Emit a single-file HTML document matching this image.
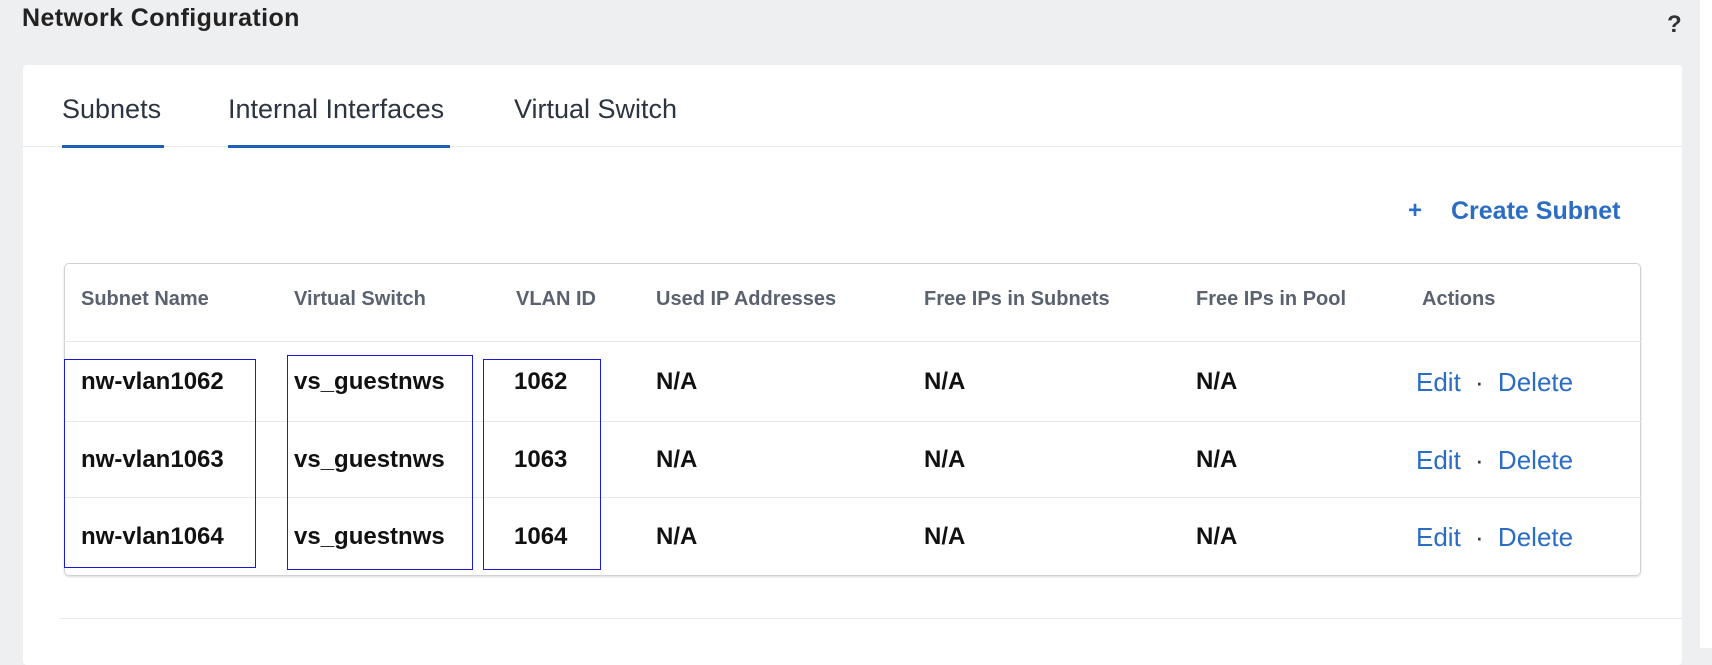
<!DOCTYPE html>
<html><head><style>
*{margin:0;padding:0;box-sizing:border-box}
body{width:1712px;height:648px;background:#eeeff1;font-family:"Liberation Sans",sans-serif;position:relative;overflow:hidden}
.a{position:absolute;white-space:nowrap}
.card{position:absolute;left:23px;top:65px;width:1659px;height:600px;background:#fff;border-radius:4px}
.tab{font-size:27px;color:#2b3440;top:94px}
.ul{position:absolute;height:3px;background:#1f5fb8;top:145px}
.h{font-size:20px;font-weight:bold;color:#5a6270;top:288px}
.d{font-size:24px;font-weight:bold;color:#111;}
.l{font-size:26px;color:#2b6cc4}
.box{position:absolute;border:1.5px solid #1a1adb}
.sep{position:absolute;left:64px;width:1577px;height:1px;background:#e6e7ea}
</style></head><body>
<div class="a" style="left:22px;top:4px;font-size:25px;font-weight:bold;color:#222;letter-spacing:0.4px">Network Configuration</div>
<div class="a" style="left:1667px;top:11px;font-size:24px;font-weight:bold;color:#333">?</div>
<div class="a" style="left:1700px;top:0;width:12px;height:648px;background:#fff"></div>
<div class="card"></div>
<div class="a" style="left:23px;top:146px;width:1659px;height:1px;background:#e8e9eb"></div>
<div class="a tab" style="left:62px">Subnets</div>
<div class="a tab" style="left:228px">Internal Interfaces</div>
<div class="a tab" style="left:514px">Virtual Switch</div>
<div class="ul" style="left:62px;width:102px"></div>
<div class="ul" style="left:228px;width:222px"></div>
<div class="a" style="left:1408px;top:197px;font-size:24px;font-weight:bold;color:#2b6cc4">+</div>
<div class="a" style="left:1451px;top:197px;font-size:25px;font-weight:bold;color:#2b6cc4">Create Subnet</div>
<div class="a" style="left:64px;top:263px;width:1577px;height:313px;border:1px solid #cfd1d5;border-radius:5px;box-shadow:0 1px 2px rgba(0,0,0,.15)"></div>
<div class="a h" style="left:81px">Subnet Name</div>
<div class="a h" style="left:294px">Virtual Switch</div>
<div class="a h" style="left:516px">VLAN ID</div>
<div class="a h" style="left:656px">Used IP Addresses</div>
<div class="a h" style="left:924px">Free IPs in Subnets</div>
<div class="a h" style="left:1196px">Free IPs in Pool</div>
<div class="a h" style="left:1422px">Actions</div>
<div class="sep" style="top:341px"></div>
<div class="sep" style="top:421px"></div>
<div class="sep" style="top:497px"></div>
<div class="a" style="left:60px;top:618px;width:1622px;height:1px;background:#e8e9eb"></div>

<div class="a d" style="left:81px;top:368px">nw-vlan1062</div>
<div class="a d" style="left:294px;top:368px">vs_guestnws</div>
<div class="a d" style="left:514px;top:368px">1062</div>
<div class="a d" style="left:656px;top:368px">N/A</div>
<div class="a d" style="left:924px;top:368px">N/A</div>
<div class="a d" style="left:1196px;top:368px">N/A</div>
<div class="a l" style="left:1416px;top:367px">Edit <span style="color:#333;margin:0 7px">·</span> Delete</div>

<div class="a d" style="left:81px;top:446px">nw-vlan1063</div>
<div class="a d" style="left:294px;top:446px">vs_guestnws</div>
<div class="a d" style="left:514px;top:446px">1063</div>
<div class="a d" style="left:656px;top:446px">N/A</div>
<div class="a d" style="left:924px;top:446px">N/A</div>
<div class="a d" style="left:1196px;top:446px">N/A</div>
<div class="a l" style="left:1416px;top:445px">Edit <span style="color:#333;margin:0 7px">·</span> Delete</div>

<div class="a d" style="left:81px;top:523px">nw-vlan1064</div>
<div class="a d" style="left:294px;top:523px">vs_guestnws</div>
<div class="a d" style="left:514px;top:523px">1064</div>
<div class="a d" style="left:656px;top:523px">N/A</div>
<div class="a d" style="left:924px;top:523px">N/A</div>
<div class="a d" style="left:1196px;top:523px">N/A</div>
<div class="a l" style="left:1416px;top:522px">Edit <span style="color:#333;margin:0 7px">·</span> Delete</div>

<div class="box" style="left:64px;top:359px;width:192px;height:209px"></div>
<div class="box" style="left:287px;top:355px;width:186px;height:215px"></div>
<div class="box" style="left:483px;top:359px;width:118px;height:211px"></div>
</body></html>
